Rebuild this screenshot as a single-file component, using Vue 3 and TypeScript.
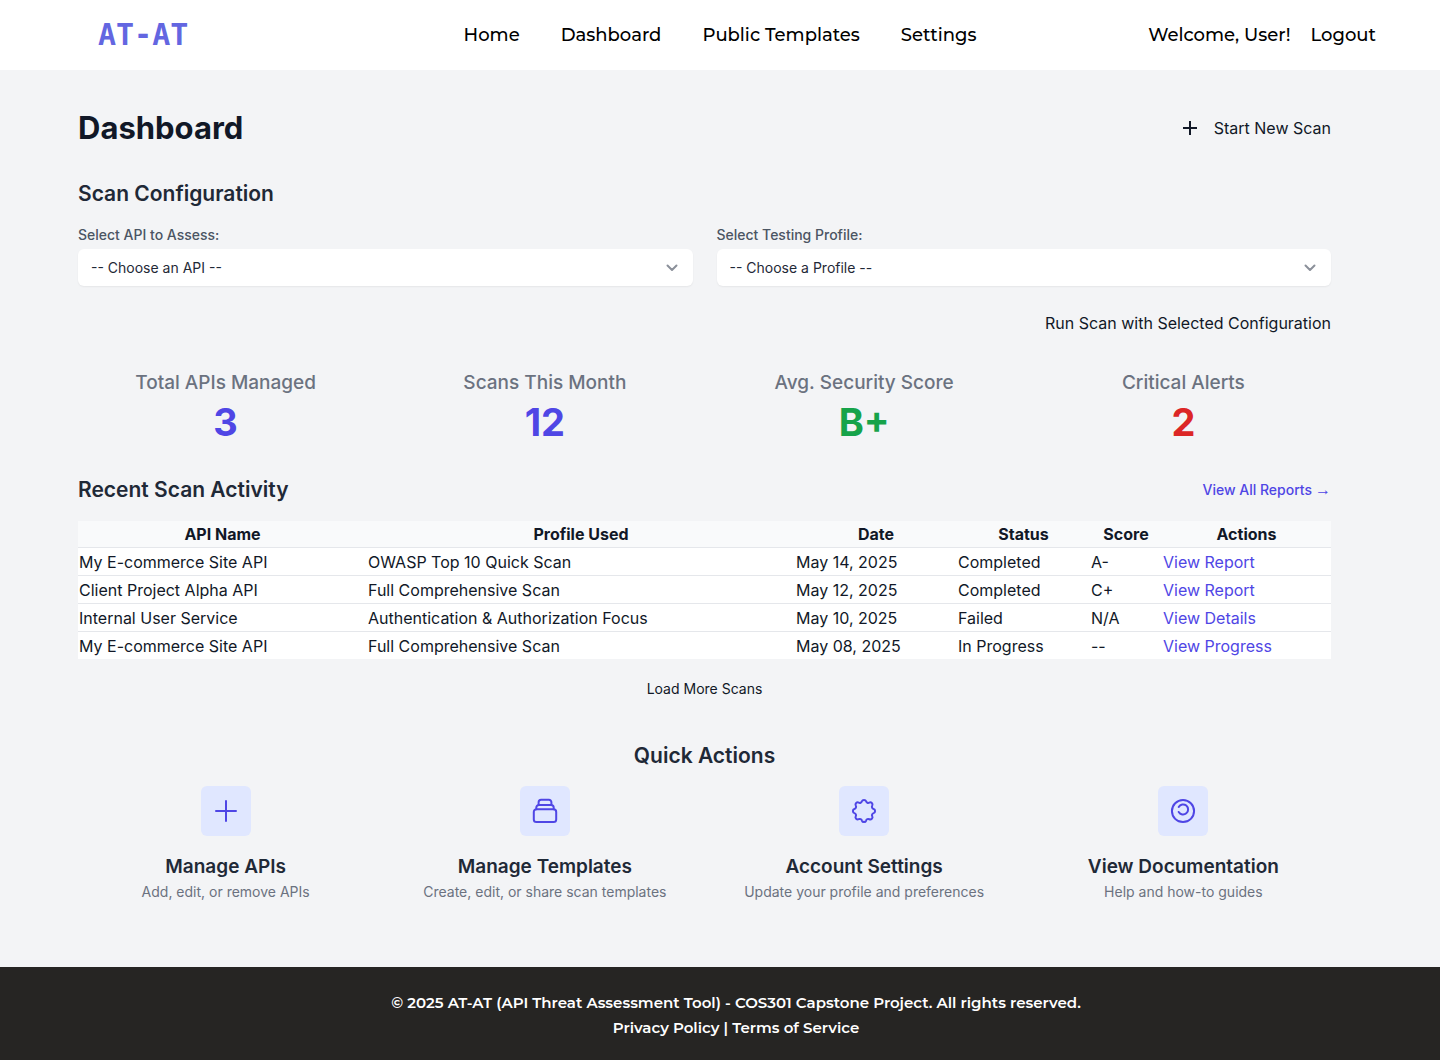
<script setup lang="ts">
import { ref } from 'vue'

interface Stat {
  label: string
  value: string
  tone: 'indigo' | 'green' | 'red'
}

interface Scan {
  api: string
  profile: string
  date: string
  status: string
  score: string
  action: string
}

interface QuickAction {
  title: string
  description: string
  viewBox: string
  paths: string[]
}

const navLinks: string[] = ['Home', 'Dashboard', 'Public Templates', 'Settings']

const selectedApi = ref('')
const selectedProfile = ref('')

const stats: Stat[] = [
  { label: 'Total APIs Managed', value: '3', tone: 'indigo' },
  { label: 'Scans This Month', value: '12', tone: 'indigo' },
  { label: 'Avg. Security Score', value: 'B+', tone: 'green' },
  { label: 'Critical Alerts', value: '2', tone: 'red' },
]

const scans: Scan[] = [
  { api: 'My E-commerce Site API', profile: 'OWASP Top 10 Quick Scan', date: 'May 14, 2025', status: 'Completed', score: 'A-', action: 'View Report' },
  { api: 'Client Project Alpha API', profile: 'Full Comprehensive Scan', date: 'May 12, 2025', status: 'Completed', score: 'C+', action: 'View Report' },
  { api: 'Internal User Service', profile: 'Authentication & Authorization Focus', date: 'May 10, 2025', status: 'Failed', score: 'N/A', action: 'View Details' },
  { api: 'My E-commerce Site API', profile: 'Full Comprehensive Scan', date: 'May 08, 2025', status: 'In Progress', score: '--', action: 'View Progress' },
]

const quickActions: QuickAction[] = [
  {
    title: 'Manage APIs',
    description: 'Add, edit, or remove APIs',
    viewBox: '0 0 24 24',
    paths: ['M12 4.5v15m7.5-7.5h-15'],
  },
  {
    title: 'Manage Templates',
    description: 'Create, edit, or share scan templates',
    viewBox: '0 0 32 32',
    paths: [
      'M7.4 14.3h17.2a2.6 2.6 0 012.6 2.6v7.6a2.6 2.6 0 01-2.6 2.6H7.4a2.6 2.6 0 01-2.6-2.6v-7.6a2.6 2.6 0 012.6-2.6z',
      'M7.3 14.2v-1.6a2.6 2.6 0 012.6-2.6h12.2a2.6 2.6 0 012.6 2.6v1.6',
      'M9.6 10V7.2a2.5 2.5 0 012.5-2.5h7.8a2.5 2.5 0 012.5 2.5V10',
    ],
  },
  {
    title: 'Account Settings',
    description: 'Update your profile and preferences',
    viewBox: '-1 -1 26 26',
    paths: [
      'M10.3 4.1c.5-1.5 2.9-1.5 3.4 0a1.8 1.8 0 002.6 1.1c1.5-.8 3.2.9 2.4 2.4a1.8 1.8 0 001.1 2.7c1.6.4 1.6 2.9 0 3.4a1.8 1.8 0 00-1.1 2.6c.8 1.5-.9 3.2-2.4 2.4a1.8 1.8 0 00-2.6 1.1c-.5 1.6-2.9 1.6-3.4 0a1.8 1.8 0 00-2.6-1.1c-1.5.8-3.2-.9-2.4-2.4a1.8 1.8 0 00-1.1-2.6c-1.6-.5-1.6-3 0-3.4a1.8 1.8 0 001.1-2.7c-.8-1.5.9-3.2 2.4-2.4a1.8 1.8 0 002.6-1.1z',
    ],
  },
  {
    title: 'View Documentation',
    description: 'Help and how-to guides',
    viewBox: '-1 -1 26 26',
    paths: ['M21 12a9 9 0 11-18 0 9 9 0 0118 0z', 'M8.5 8.7a4.1 4.1 0 110 4.1'],
  },
]
</script>

<template>
  <div class="page">
    <header class="topbar">
      <a class="logo" href="#">AT-AT</a>
      <nav class="nav" aria-label="Main">
        <a v-for="link in navLinks" :key="link" href="#">{{ link }}</a>
      </nav>
      <div class="account">
        <span>Welcome, User!</span>
        <a href="#">Logout</a>
      </div>
    </header>

    <main class="content">
      <div class="title-row">
        <h1>Dashboard</h1>
        <button class="plain-button" type="button">
          <svg class="plus" viewBox="0 0 16 16" aria-hidden="true">
            <path d="M8 1v14M1 8h14" />
          </svg>
          Start New Scan
        </button>
      </div>

      <section class="config">
        <h2>Scan Configuration</h2>
        <div class="fields">
          <div class="field">
            <label for="api">Select API to Assess:</label>
            <div class="select-wrap">
              <select id="api" v-model="selectedApi">
                <option value="">-- Choose an API --</option>
              </select>
              <svg class="chevron" viewBox="0 0 12 8" aria-hidden="true"><path d="M1.5 1.5L6 6l4.5-4.5" /></svg>
            </div>
          </div>
          <div class="field">
            <label for="profile">Select Testing Profile:</label>
            <div class="select-wrap">
              <select id="profile" v-model="selectedProfile">
                <option value="">-- Choose a Profile --</option>
              </select>
              <svg class="chevron" viewBox="0 0 12 8" aria-hidden="true"><path d="M1.5 1.5L6 6l4.5-4.5" /></svg>
            </div>
          </div>
        </div>
        <div class="run-row">
          <button class="plain-button" type="button">Run Scan with Selected Configuration</button>
        </div>
      </section>

      <section class="stats">
        <div v-for="stat in stats" :key="stat.label" class="stat">
          <h3>{{ stat.label }}</h3>
          <p :class="stat.tone">{{ stat.value }}</p>
        </div>
      </section>

      <section class="recent">
        <div class="recent-head">
          <h2>Recent Scan Activity</h2>
          <a class="all-reports" href="#">View All Reports <span class="arrow">→</span></a>
        </div>
        <table>
          <colgroup>
            <col class="c-api" />
            <col class="c-profile" />
            <col class="c-date" />
            <col class="c-status" />
            <col class="c-score" />
            <col class="c-actions" />
          </colgroup>
          <thead>
            <tr>
              <th scope="col">API Name</th>
              <th scope="col">Profile Used</th>
              <th scope="col">Date</th>
              <th scope="col">Status</th>
              <th scope="col">Score</th>
              <th scope="col">Actions</th>
            </tr>
          </thead>
          <tbody>
            <tr v-for="scan in scans" :key="scan.date">
              <td>{{ scan.api }}</td>
              <td>{{ scan.profile }}</td>
              <td>{{ scan.date }}</td>
              <td>{{ scan.status }}</td>
              <td>{{ scan.score }}</td>
              <td><a href="#">{{ scan.action }}</a></td>
            </tr>
          </tbody>
        </table>
        <div class="more-row">
          <button class="plain-button small" type="button">Load More Scans</button>
        </div>
      </section>

      <section class="quick">
        <h2>Quick Actions</h2>
        <div class="quick-grid">
          <a v-for="item in quickActions" :key="item.title" class="quick-card" href="#">
            <span class="tile">
              <svg :viewBox="item.viewBox" aria-hidden="true">
                <path v-for="d in item.paths" :key="d" :d="d" />
              </svg>
            </span>
            <h3>{{ item.title }}</h3>
            <p>{{ item.description }}</p>
          </a>
        </div>
      </section>
    </main>

    <footer class="footer">
      <p>© 2025 AT-AT (API Threat Assessment Tool) - COS301 Capstone Project. All rights reserved.</p>
      <p><a href="#">Privacy Policy</a> | <a href="#">Terms of Service</a></p>
    </footer>
  </div>
</template>

<style>
body {
  margin: 0;
  background: #f3f4f6;
}
</style>

<style scoped>
.page {
  display: flex;
  flex-direction: column;
  min-height: 100vh;
  background: #f3f4f6;
  color: #111827;
  font-family: Inter, "Liberation Sans", sans-serif;
  font-size: 16px;
  line-height: 24px;
}

h1,
h2,
h3,
p {
  margin: 0;
}

a {
  color: inherit;
  text-decoration: none;
}

.topbar {
  display: grid;
  grid-template-columns: 1fr auto 1fr;
  align-items: center;
  height: 70px;
  padding: 0 64px;
  box-sizing: border-box;
  background: #fff;
  color: #000;
  font-family: Montserrat, Inter, sans-serif;
  font-size: 18px;
  font-weight: 500;
}

.logo {
  padding-left: 34px;
  color: #6366e1;
  font-family: "DejaVu Sans Mono", monospace;
  font-size: 30px;
  font-weight: 700;
}

.nav {
  display: flex;
  gap: 41px;
}

.account {
  display: flex;
  justify-content: flex-end;
  gap: 20px;
}

.content {
  flex: 1;
  padding: 38px 109px 0 78px;
}

.title-row,
.recent-head {
  display: flex;
  align-items: center;
  justify-content: space-between;
}

h1 {
  font-size: 31px;
  font-weight: 700;
  line-height: 40px;
}

h2 {
  color: #1f2937;
  font-size: 21px;
  font-weight: 600;
  line-height: 28px;
}

.plain-button {
  display: flex;
  align-items: center;
  gap: 16px;
  padding: 0;
  border: 0;
  background: none;
  color: #111827;
  font: inherit;
  cursor: pointer;
}

.plain-button.small {
  font-size: 14px;
}

.plus {
  width: 16px;
  height: 16px;
  fill: none;
  stroke: currentColor;
  stroke-width: 2;
}

.config {
  margin-top: 32px;
}

.fields {
  display: grid;
  grid-template-columns: 1fr 1fr;
  gap: 24px;
  margin-top: 16px;
}

.field label {
  display: block;
  margin-bottom: 4px;
  color: #4b5563;
  font-size: 14px;
  font-weight: 500;
  line-height: 21px;
}

.select-wrap {
  position: relative;
}

select {
  display: block;
  width: 100%;
  height: 37px;
  padding: 0 40px 0 13px;
  border: 0;
  border-radius: 6px;
  appearance: none;
  background: #fff;
  box-shadow: 0 1px 2px rgba(0, 0, 0, 0.06);
  color: #1f2937;
  font: inherit;
  font-size: 14px;
}

.chevron {
  position: absolute;
  top: 15px;
  right: 15px;
  width: 12px;
  height: 8px;
  fill: none;
  stroke: #8b909a;
  stroke-width: 2;
  stroke-linecap: round;
  stroke-linejoin: round;
  pointer-events: none;
}

.run-row {
  display: flex;
  justify-content: flex-end;
  margin-top: 25px;
}

.stats,
.quick-grid {
  display: grid;
  grid-template-columns: repeat(4, 1fr);
  gap: 24px;
  text-align: center;
}

.stats {
  margin-top: 33px;
}

.stat h3 {
  color: #6b7280;
  font-size: 19px;
  font-weight: 500;
  line-height: 30px;
}

.stat p {
  font-size: 38px;
  font-weight: 700;
  line-height: 48px;
}

.indigo {
  color: #4f46e5;
}

.green {
  color: #16a34a;
}

.red {
  color: #dc2626;
}

.recent {
  margin-top: 30px;
}

.all-reports {
  display: flex;
  align-items: center;
  gap: 3px;
  color: #4f46e5;
  font-size: 14px;
  font-weight: 500;
}

.arrow {
  font-family: "Liberation Sans", sans-serif;
  font-size: 16px;
  font-weight: 400;
}

table {
  width: 100%;
  margin-top: 17px;
  border-collapse: collapse;
  table-layout: fixed;
  background: #fff;
}

.c-api { width: 289px; }
.c-profile { width: 428px; }
.c-date { width: 162px; }
.c-status { width: 133px; }
.c-score { width: 72px; }
.c-actions { width: 169px; }

thead {
  background: #f9fafb;
}

th,
td {
  padding: 1px 1px 0;
  line-height: 26px;
}

th {
  padding-top: 0;
  font-weight: 700;
}

tbody tr {
  border-top: 1px solid #e5e7eb;
}

td a {
  color: #4f46e5;
}

.more-row {
  display: flex;
  justify-content: center;
  margin-top: 18px;
}

.quick {
  margin-top: 41px;
}

.quick h2 {
  text-align: center;
}

.quick-grid {
  margin-top: 16px;
}

.quick-card {
  display: flex;
  flex-direction: column;
  align-items: center;
}

.tile {
  display: flex;
  align-items: center;
  justify-content: center;
  width: 50px;
  height: 50px;
  border-radius: 6px;
  background: #e0e7ff;
}

.tile svg {
  width: 32px;
  height: 32px;
  fill: none;
  stroke: #4f46e5;
  stroke-width: 2;
  stroke-linecap: round;
  stroke-linejoin: round;
}

.tile path {
  vector-effect: non-scaling-stroke;
}

.quick-card h3 {
  margin-top: 17px;
  color: #1f2937;
  font-size: 19px;
  font-weight: 600;
  line-height: 28px;
}

.quick-card p {
  color: #6b7280;
  font-size: 14px;
  line-height: 22px;
}

.footer {
  height: 93px;
  padding: 23px 0 0 32px;
  box-sizing: border-box;
  background: #262523;
  color: #fff;
  font-family: Montserrat, Inter, sans-serif;
  font-size: 15px;
  font-weight: 600;
  line-height: 25px;
  text-align: center;
}
</style>
